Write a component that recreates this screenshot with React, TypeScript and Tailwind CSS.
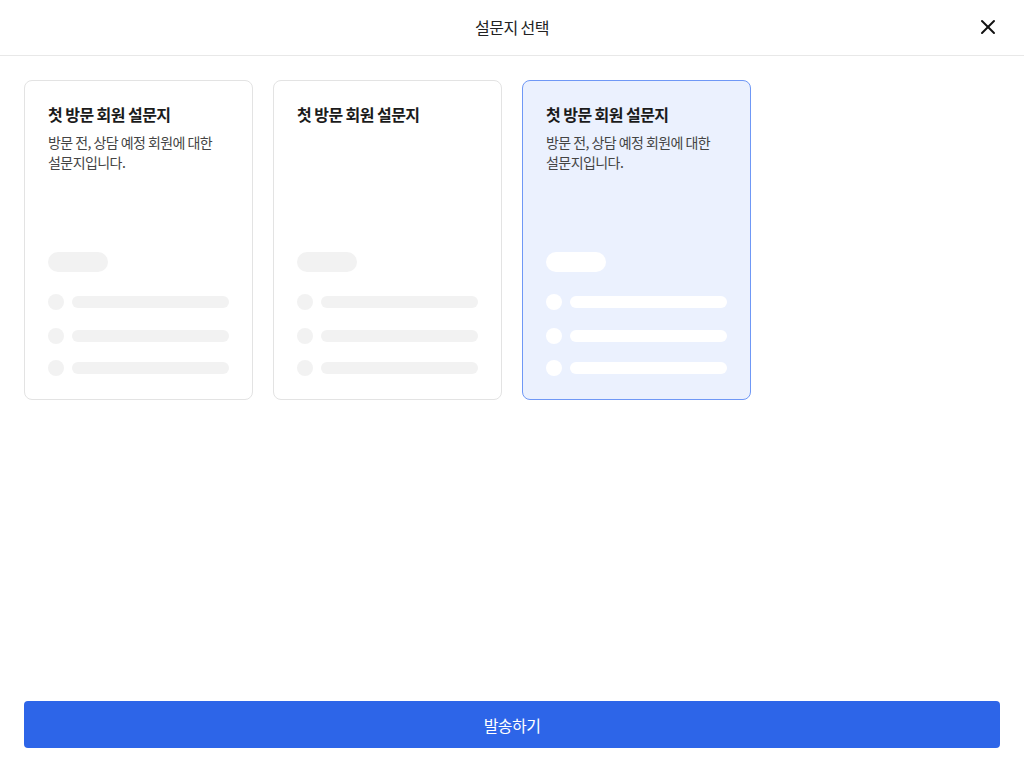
import { X } from 'lucide-react'

type Survey = {
    id: number
    title: string
    description?: string
}

const SURVEYS: Survey[] = [
    { id: 1, title: '첫 방문 회원 설문지', description: '방문 전, 상담 예정 회원에 대한 설문지입니다.' },
    { id: 2, title: '첫 방문 회원 설문지' },
    { id: 3, title: '첫 방문 회원 설문지', description: '방문 전, 상담 예정 회원에 대한 설문지입니다.' },
]

const FONT = "font-['Noto_Sans_CJK_KR','Noto_Sans',sans-serif] tracking-[-0.035em]"

const SurveyCard = ({ survey, selected }: { survey: Survey, selected: boolean }) => {
    const skeleton = selected ? 'bg-white' : 'bg-[#f2f2f2]'
    return (
        <div className={`flex flex-col h-[320px] rounded-lg border px-[23px] pt-6 pb-[23px] ${selected ? 'border-[#6f98f6] bg-[#ebf1fe]' : 'border-[#e3e3e3] bg-white'}`}>
            <h3 className="-mt-0.5 text-base leading-[22px] font-bold text-[#1b1b1b]">{survey.title}</h3>
            {survey.description && (
                <p className="mt-[7px] text-sm leading-5 text-[#444] break-keep pr-2">{survey.description}</p>
            )}

            {/* placeholder preview of the survey form */}
            <div className="mt-auto">
                <div className={`w-[60px] h-5 rounded-full ${skeleton}`} />
                <div className="mt-[22px] flex items-center gap-2">
                    <div className={`w-4 h-4 rounded-full ${skeleton}`} />
                    <div className={`flex-1 h-3 rounded-full ${skeleton}`} />
                </div>
                <div className="mt-[18px] flex items-center gap-2">
                    <div className={`w-4 h-4 rounded-full ${skeleton}`} />
                    <div className={`flex-1 h-3 rounded-full ${skeleton}`} />
                </div>
                <div className="mt-4 flex items-center gap-2">
                    <div className={`w-4 h-4 rounded-full ${skeleton}`} />
                    <div className={`flex-1 h-3 rounded-full ${skeleton}`} />
                </div>
            </div>
        </div>
    )
}

export default function App() {
    const selectedId = 3

    return (
        <div className={`${FONT} w-full h-[768px] bg-white flex flex-col`}>
            <header className="relative h-14 flex items-center justify-center border-b border-[#e8e8e8]">
                <h1 className="-mt-0.5 text-base text-[#222]">설문지 선택</h1>
                <button className="absolute right-[24px] top-[15px] text-[#111]">
                    <X size={24} strokeWidth={2} />
                </button>
            </header>

            <main className="flex-1 px-6 pt-6">
                <div className="grid grid-cols-4 gap-5">
                    {SURVEYS.map((s) => (
                        <SurveyCard key={s.id} survey={s} selected={s.id === selectedId} />
                    ))}
                </div>
            </main>

            <div className="px-6 pb-5">
                <button className="w-full h-[47px] rounded bg-[#2d65e8] text-white text-base">발송하기</button>
            </div>
        </div>
    )
}
